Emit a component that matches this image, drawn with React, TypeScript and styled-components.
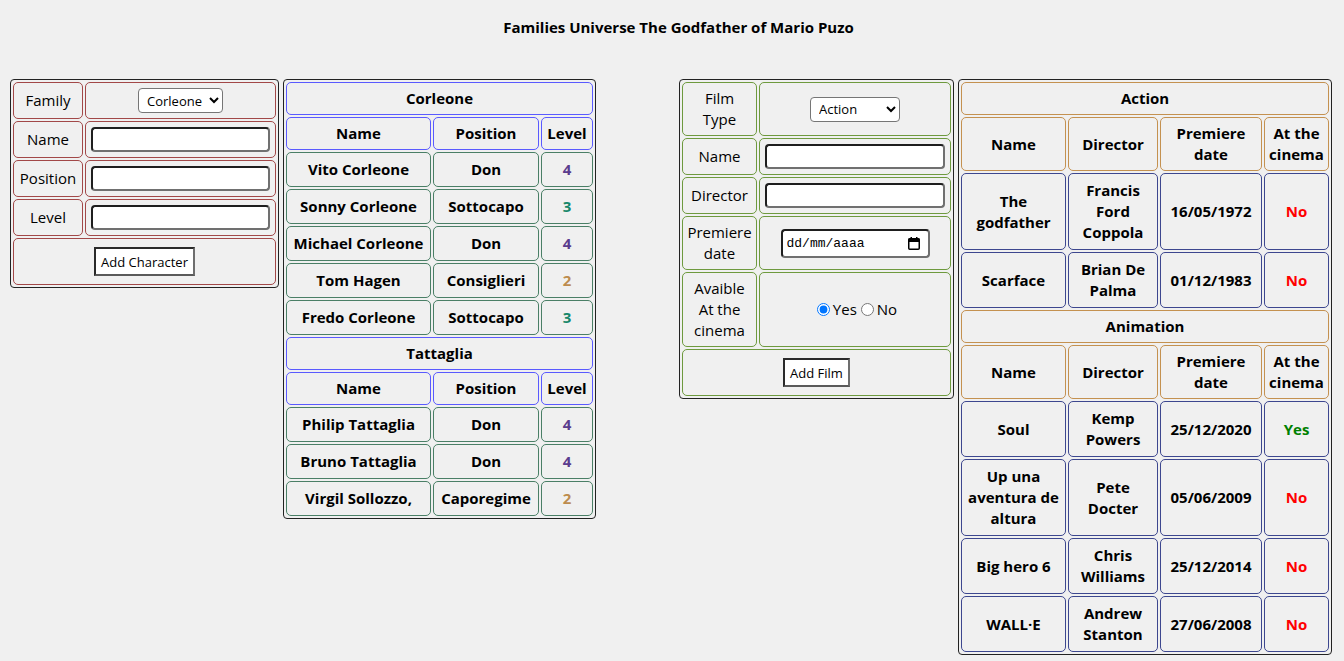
import React from "react";
import styled, { createGlobalStyle } from "styled-components";

const GlobalStyle = createGlobalStyle`
  html, body {
    margin: 0;
    padding: 0;
    background: #f0f0f0;
  }
  body {
    font-family: "Open Sans", "Noto Sans", sans-serif;
    color: #000;
  }
`;

const BROWN = "#a24848";
const BLUE = "#5a5aff";
const GREEN = "#4a7f66";
const OLIVE = "#6e9a3e";
const PERU = "#c49150";
const NAVY = "#3d478f";

const Page = styled.div`
  padding-top: 17px;
`;

const Title = styled.h1`
  margin: 0;
  padding-left: 13px;
  font-size: 15px;
  line-height: 20px;
  font-weight: 700;
  text-align: center;
`;

const Main = styled.main`
  margin-top: 42px;
  display: grid;
  grid-template-columns: 679px auto;
  align-items: start;
`;

const Group = styled.section<{ $pad?: number }>`
  display: flex;
  align-items: flex-start;
  gap: 4px;
  padding-left: ${(p) => p.$pad ?? 0}px;
`;

const Panel = styled.table<{ $width: number }>`
  width: ${(p) => p.$width}px;
  table-layout: fixed;
  border-collapse: separate;
  border-spacing: 2px;
  border: 1px solid #222;
  border-radius: 4px;
  font-size: 15px;
  line-height: 21px;
`;

const FormLabel = styled.td<{ $tone: string }>`
  border: 1px solid ${(p) => p.$tone};
  border-radius: 5px;
  padding: 5px 4px;
  text-align: center;
  vertical-align: middle;
  font-weight: 400;
`;

const FormField = styled.td<{ $tone: string }>`
  border: 1px solid ${(p) => p.$tone};
  border-radius: 5px;
  padding: 5px;
  text-align: center;
  vertical-align: middle;
`;

const HeadCell = styled.th<{ $tone: string }>`
  border: 1px solid ${(p) => p.$tone};
  border-radius: 5px;
  padding: 5px 4px;
  text-align: center;
  vertical-align: middle;
  font-weight: 700;
`;

const DataCell = styled.td<{ $tone: string; $color?: string }>`
  border: 1px solid ${(p) => p.$tone};
  border-radius: 5px;
  padding: 6px 4px;
  text-align: center;
  vertical-align: middle;
  font-weight: 700;
  color: ${(p) => p.$color ?? "#000"};
`;

const TextInput = styled.input`
  display: block;
  width: 100%;
  height: 25px;
  box-sizing: border-box;
  border: 2px solid;
  border-color: #1e1e1e #707070 #707070 #1e1e1e;
  border-radius: 4px;
  background: #fff;
  padding: 1px 4px;
  font-family: "Open Sans", sans-serif;
  font-size: 13px;
`;

const Select = styled.select<{ $width: number }>`
  width: ${(p) => p.$width}px;
  height: 25px;
  box-sizing: border-box;
  border: 1px solid #767676;
  border-radius: 4px;
  background: #fff;
  color: #000;
  font-family: "Open Sans", sans-serif;
  font-size: 13px;
  padding: 0 2px 0 4px;
`;

const Button = styled.button`
  height: 29px;
  box-sizing: border-box;
  border: 2px solid;
  border-color: #2a2a2a #6e6e6e #5a5a5a #2a2a2a;
  background: #fff;
  color: #000;
  font-family: "Open Sans", sans-serif;
  font-size: 13px;
  padding: 0 5px;
  margin: 3px 0;
`;

const DateField = styled.label`
  display: inline-flex;
  align-items: center;
  justify-content: space-between;
  width: 149px;
  height: 29px;
  box-sizing: border-box;
  border: 2px solid;
  border-color: #1e1e1e #707070 #707070 #1e1e1e;
  border-radius: 4px;
  background: #fff;
  padding: 0 7px 0 4px;
`;

const DateText = styled.input`
  width: 100px;
  border: none;
  outline: none;
  background: transparent;
  padding: 0;
  font-family: "Liberation Mono", monospace;
  font-size: 13px;
  &::placeholder {
    color: #000;
  }
`;

const RadioRow = styled.div`
  display: inline-flex;
  align-items: center;
  font-size: 15px;
`;

const RadioLabel = styled.label`
  display: inline-flex;
  align-items: center;
`;

const Radio = styled.input`
  width: 13px;
  height: 13px;
  margin: 0 3px 0 4px;
`;

const CalendarIcon = () => (
  <svg width="14" height="15" viewBox="0 0 14 15" aria-hidden="true">
    <rect x="1.75" y="2.75" width="10.5" height="10.5" rx="1" fill="none" stroke="#000" strokeWidth="1.5" />
    <rect x="1.5" y="2.5" width="11" height="3.5" fill="#000" />
    <rect x="3.5" y="1" width="1.5" height="2.5" fill="#000" />
    <rect x="9" y="1" width="1.5" height="2.5" fill="#000" />
  </svg>
);

const LEVEL_COLORS: Record<number, string> = {
  4: "#5b3c8e",
  3: "#16876a",
  2: "#bd8c4e",
};

type Character = { name: string; position: string; level: number };

const families: { name: string; members: Character[] }[] = [
  {
    name: "Corleone",
    members: [
      { name: "Vito Corleone", position: "Don", level: 4 },
      { name: "Sonny Corleone", position: "Sottocapo", level: 3 },
      { name: "Michael Corleone", position: "Don", level: 4 },
      { name: "Tom Hagen", position: "Consiglieri", level: 2 },
      { name: "Fredo Corleone", position: "Sottocapo", level: 3 },
    ],
  },
  {
    name: "Tattaglia",
    members: [
      { name: "Philip Tattaglia", position: "Don", level: 4 },
      { name: "Bruno Tattaglia", position: "Don", level: 4 },
      { name: "Virgil Sollozzo,", position: "Caporegime", level: 2 },
    ],
  },
];

type Film = { name: string; director: string; date: string; cinema: boolean };

const filmTypes: { name: string; films: Film[] }[] = [
  {
    name: "Action",
    films: [
      { name: "The godfather", director: "Francis Ford Coppola", date: "16/05/1972", cinema: false },
      { name: "Scarface", director: "Brian De Palma", date: "01/12/1983", cinema: false },
    ],
  },
  {
    name: "Animation",
    films: [
      { name: "Soul", director: "Kemp Powers", date: "25/12/2020", cinema: true },
      { name: "Up una aventura de altura", director: "Pete Docter", date: "05/06/2009", cinema: false },
      { name: "Big hero 6", director: "Chris Williams", date: "25/12/2014", cinema: false },
      { name: "WALL·E", director: "Andrew Stanton", date: "27/06/2008", cinema: false },
    ],
  },
];

function CharacterForm() {
  return (
    <Panel $width={269}>
      <colgroup>
        <col style={{ width: 70 }} />
        <col style={{ width: 191 }} />
      </colgroup>
      <tbody>
        <tr>
          <FormLabel $tone={BROWN}>Family</FormLabel>
          <FormField $tone={BROWN}>
            <Select $width={85} defaultValue="Corleone">
              <option>Corleone</option>
              <option>Tattaglia</option>
            </Select>
          </FormField>
        </tr>
        {["Name", "Position", "Level"].map((l) => (
          <tr key={l}>
            <FormLabel $tone={BROWN}>{l}</FormLabel>
            <FormField $tone={BROWN}>
              <TextInput type="text" />
            </FormField>
          </tr>
        ))}
        <tr>
          <FormField $tone={BROWN} colSpan={2}>
            <Button type="button">Add Character</Button>
          </FormField>
        </tr>
      </tbody>
    </Panel>
  );
}

function FamilyTable() {
  return (
    <Panel $width={313}>
      <colgroup>
        <col style={{ width: 145 }} />
        <col style={{ width: 106 }} />
        <col style={{ width: 52 }} />
      </colgroup>
      {families.map((f) => (
        <tbody key={f.name}>
          <tr>
            <HeadCell $tone={BLUE} colSpan={3}>
              {f.name}
            </HeadCell>
          </tr>
          <tr>
            <HeadCell $tone={BLUE}>Name</HeadCell>
            <HeadCell $tone={BLUE}>Position</HeadCell>
            <HeadCell $tone={BLUE}>Level</HeadCell>
          </tr>
          {f.members.map((m) => (
            <tr key={m.name}>
              <DataCell $tone={GREEN}>{m.name}</DataCell>
              <DataCell $tone={GREEN}>{m.position}</DataCell>
              <DataCell $tone={GREEN} $color={LEVEL_COLORS[m.level]}>
                {m.level}
              </DataCell>
            </tr>
          ))}
        </tbody>
      ))}
    </Panel>
  );
}

function FilmForm() {
  return (
    <Panel $width={275}>
      <colgroup>
        <col style={{ width: 75 }} />
        <col style={{ width: 192 }} />
      </colgroup>
      <tbody>
        <tr>
          <FormLabel $tone={OLIVE}>Film Type</FormLabel>
          <FormField $tone={OLIVE}>
            <Select $width={90} defaultValue="Action">
              <option>Action</option>
              <option>Animation</option>
            </Select>
          </FormField>
        </tr>
        {["Name", "Director"].map((l) => (
          <tr key={l}>
            <FormLabel $tone={OLIVE}>{l}</FormLabel>
            <FormField $tone={OLIVE}>
              <TextInput type="text" />
            </FormField>
          </tr>
        ))}
        <tr>
          <FormLabel $tone={OLIVE}>Premiere date</FormLabel>
          <FormField $tone={OLIVE}>
            <DateField>
              <DateText type="text" placeholder="dd/mm/aaaa" />
              <CalendarIcon />
            </DateField>
          </FormField>
        </tr>
        <tr>
          <FormLabel $tone={OLIVE}>Avaible At the cinema</FormLabel>
          <FormField $tone={OLIVE}>
            <RadioRow>
              <RadioLabel>
                <Radio type="radio" name="cinema" defaultChecked />
                Yes
              </RadioLabel>
              <RadioLabel>
                <Radio type="radio" name="cinema" />
                No
              </RadioLabel>
            </RadioRow>
          </FormField>
        </tr>
        <tr>
          <FormField $tone={OLIVE} colSpan={2}>
            <Button type="button">Add Film</Button>
          </FormField>
        </tr>
      </tbody>
    </Panel>
  );
}

function FilmTable() {
  return (
    <Panel $width={374}>
      <colgroup>
        <col style={{ width: 105 }} />
        <col style={{ width: 90 }} />
        <col style={{ width: 102 }} />
        <col style={{ width: 65 }} />
      </colgroup>
      {filmTypes.map((t) => (
        <tbody key={t.name}>
          <tr>
            <HeadCell $tone={PERU} colSpan={4}>
              {t.name}
            </HeadCell>
          </tr>
          <tr>
            <HeadCell $tone={PERU}>Name</HeadCell>
            <HeadCell $tone={PERU}>Director</HeadCell>
            <HeadCell $tone={PERU}>Premiere date</HeadCell>
            <HeadCell $tone={PERU}>At the cinema</HeadCell>
          </tr>
          {t.films.map((f) => (
            <tr key={f.name}>
              <DataCell $tone={NAVY}>{f.name}</DataCell>
              <DataCell $tone={NAVY}>{f.director}</DataCell>
              <DataCell $tone={NAVY}>{f.date}</DataCell>
              <DataCell $tone={NAVY} $color={f.cinema ? "#008000" : "#ff0000"}>
                {f.cinema ? "Yes" : "No"}
              </DataCell>
            </tr>
          ))}
        </tbody>
      ))}
    </Panel>
  );
}

export default function App() {
  return (
    <Page>
      <GlobalStyle />
      <Title>Families Universe The Godfather of Mario Puzo</Title>
      <Main>
        <Group $pad={10}>
          <CharacterForm />
          <FamilyTable />
        </Group>
        <Group>
          <FilmForm />
          <FilmTable />
        </Group>
      </Main>
    </Page>
  );
}
